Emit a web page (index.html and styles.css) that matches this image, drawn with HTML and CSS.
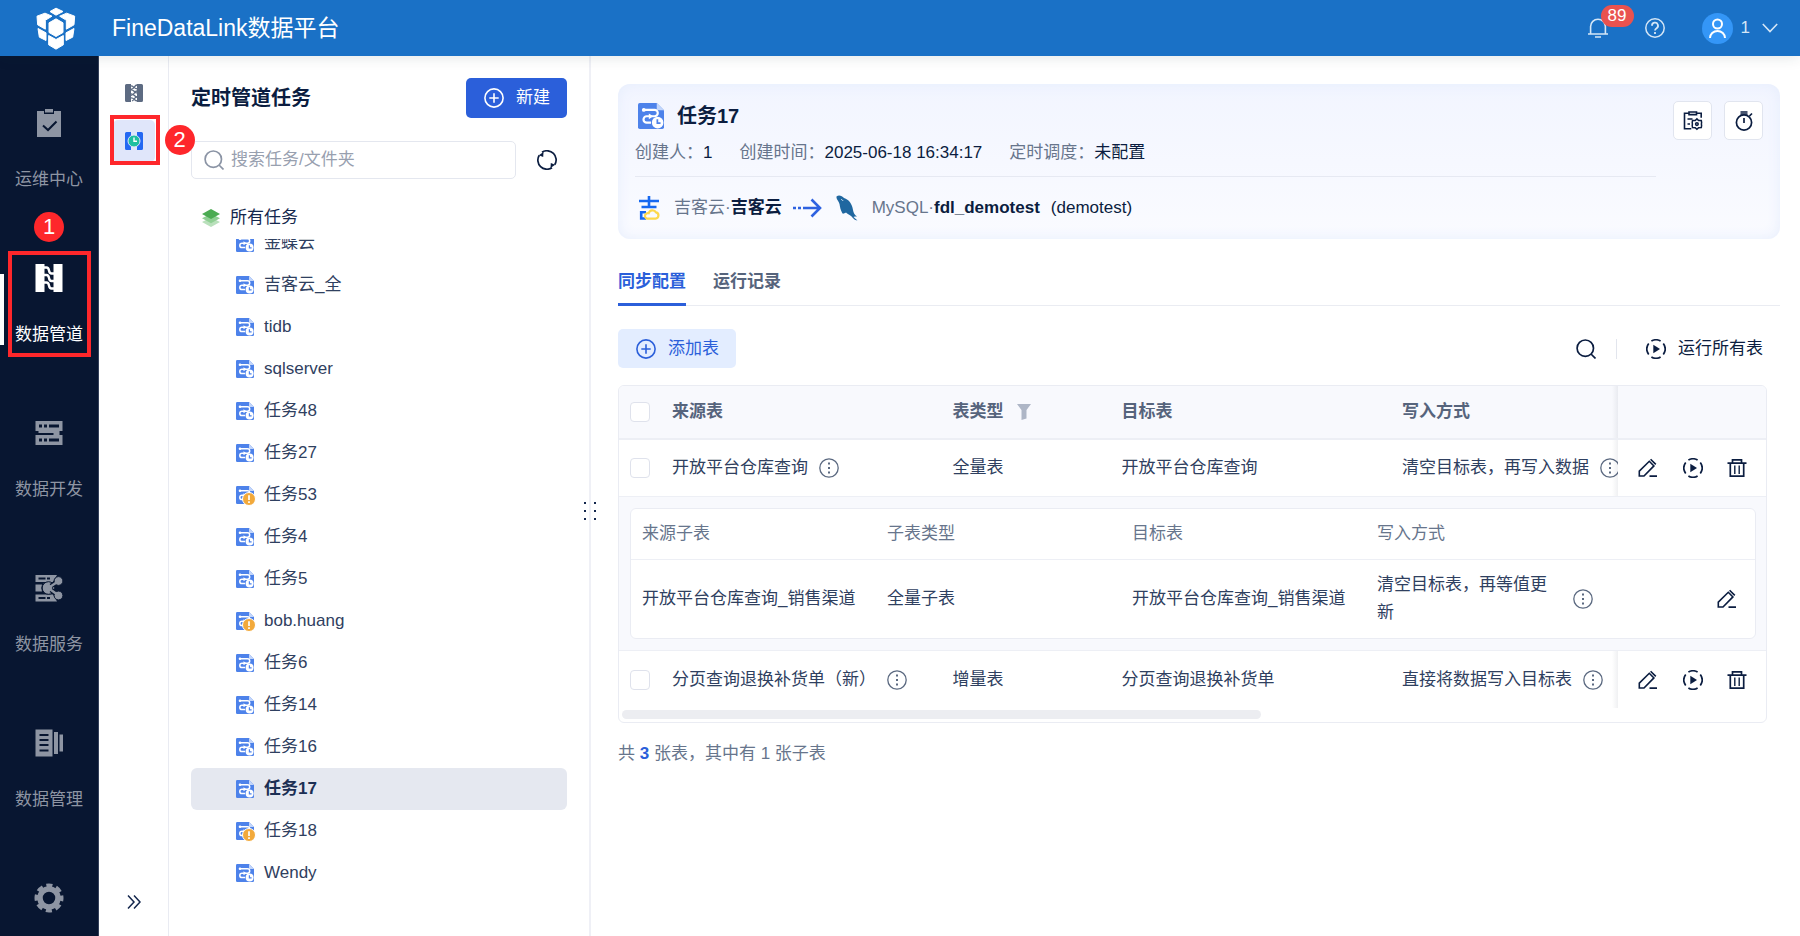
FILE: index.html
```html
<!DOCTYPE html>
<html lang="zh-CN">
<head>
<meta charset="utf-8">
<title>FineDataLink数据平台</title>
<link rel="stylesheet" href="styles.css">
</head>
<body>
<svg class="sprite" aria-hidden="true">
  <symbol id="i-task" viewBox="0 0 18 18">
    <path fill="#4d82ea" d="M1.200 0H13l5 5v11.800q0 1.200-1.200 1.200H1.200Q0 18 0 16.800V1.200Q0 0 1.200 0z"/>
    <path fill="#c3d6fb" d="M13 0l5 5h-4.200q-.8 0-.8-.8z"/>
    <path fill="none" stroke="#fff" stroke-width="1.500" d="M3.500 4.800H11.500a2.200 2.200 0 0 1 0 4.400H6a2.200 2.200 0 0 0 0 4.400H9"/>
    <circle cx="4" cy="4.800" r="1.300" fill="#fff"/><path fill="#fff" d="M7.500 7.200l3 2-3 2z"/>
    <circle cx="13.600" cy="13.600" r="4" fill="#fff"/>
    <path fill="none" stroke="#4d82ea" stroke-width="1.200" d="M13.400 11.300v2.600h2.200"/>
  </symbol>
  <symbol id="i-warn" viewBox="0 0 14 14">
    <circle cx="7" cy="7" r="6.500" fill="#f2a93b" stroke="#fff"/>
    <path stroke="#fff" stroke-width="1.700" d="M7 3.200v4.800M7 9.300v1.700"/>
  </symbol>
  <symbol id="i-plus" viewBox="0 0 20 20">
    <g fill="none" stroke="currentColor" stroke-width="1.600"><circle cx="10" cy="10" r="9.100"/><path d="M10 5.300v9.400M5.300 10h9.400"/></g>
  </symbol>
  <symbol id="i-search" viewBox="0 0 20 20">
    <g fill="none" stroke="currentColor" stroke-width="1.700"><circle cx="9.300" cy="9.200" r="8.200"/><path d="M15 15l4.500 4.500"/></g>
  </symbol>
  <symbol id="i-more" viewBox="0 0 20 20">
    <circle cx="10" cy="10" r="9.200" fill="none" stroke="currentColor" stroke-width="1.300"/>
    <path fill="currentColor" d="M9 4.600h2v2H9zM9 9h2v2H9zM9 13.400h2v2H9z"/>
  </symbol>
  <symbol id="i-run" viewBox="0 0 20 20">
    <path fill="none" stroke="currentColor" stroke-width="1.700" d="M5.400 2.100A9.100 9.100 0 0 1 14.600 2.100M17.300 4.600A9.100 9.100 0 0 1 17.300 15.400M14.600 17.900A9.100 9.100 0 0 1 5.400 17.900M2.700 15.400A9.100 9.100 0 0 1 2.700 4.600"/>
    <path fill="currentColor" d="M7.300 5.800l6.700 4.200-6.700 4.200z"/>
  </symbol>
  <symbol id="i-edit" viewBox="0 0 20 20">
    <g fill="none" stroke="currentColor" stroke-width="1.600"><path d="M1.300 18v-4.800L11.300 3.300l4.600 4.600L6 18zM12.600 1.200l5.200 5.200"/><path d="M11.500 18.100h7.500"/></g>
  </symbol>
  <symbol id="i-trash" viewBox="0 0 20 20">
    <g fill="none" stroke="currentColor" stroke-width="1.700"><path d="M.5 5.200h19M5.500 5V1.800h9V5M3.300 5.500v12.700h13.400V5.500"/><path stroke-width="1.400" d="M7.800 7.500v8.500M12.200 7.500v8.500"/></g>
  </symbol>
</svg>

<header class="topbar">
  <svg class="logo" viewBox="110 20 120 128" fill="#fff" stroke="#fff" stroke-width="3" stroke-linejoin="round">
    <path d="M152 33l18-10 21 10-21 11z"/>
    <path d="M113 47l24-9 21 9-18 11-2 2v26l-23-13z"/>
    <path d="M226 47l-24-9-21 9 18 11 2 2v26l23-13z"/>
    <path d="M149 67l21-12 21 12v29l-21 12-21-12z"/>
    <path d="M116 84l24 13v23l-20-10z"/>
    <path d="M224 84l-24 13v23l20-10z"/>
    <path d="M148 105l22 12 22-12v28l-22 13-22-13z"/>
  </svg>
  <h1 class="brand">FineDataLink数据平台</h1>
  <div class="top-actions">
    <button class="icon-btn bell" aria-label="通知">
      <svg class="i20" viewBox="0 0 20 20" fill="none" stroke="currentColor" stroke-width="1.600"><path d="M0 16h20M2.600 16V8.600a7.400 7.400 0 0 1 14.800 0V16M7 19h6"/></svg>
      <span class="count">89</span>
    </button>
    <button class="icon-btn help" aria-label="帮助">
      <svg class="i20" viewBox="0 0 20 20" fill="none" stroke="currentColor" stroke-width="1.500"><circle cx="10" cy="10" r="9.200"/><path stroke-width="1.800" d="M7 7.800a3 3 0 1 1 4.600 2.400Q10 11.200 10 12.600M10 14v2"/></svg>
    </button>
    <button class="icon-btn user">
      <svg class="avatar" viewBox="0 0 31 31"><circle cx="15.500" cy="15.500" r="15.500" fill="#3496f7"/><g fill="none" stroke="#fff" stroke-width="2"><circle cx="15.500" cy="11" r="4.500"/><path d="M8 25a7.500 7 0 0 1 15 0"/></g></svg>
      <span>1</span>
      <svg class="caret" viewBox="0 0 16 10" fill="none" stroke="currentColor" stroke-width="1.600"><path d="M.8 1L8 8.500 15.200 1"/></svg>
    </button>
  </div>
</header>

<div class="app">
  <nav class="nav" aria-label="主导航">
    <a class="nav-item" href="#">
      <svg viewBox="0 0 30 30"><path fill="currentColor" d="M3 3h7v3h10V3h7v26H3z"/><path fill="currentColor" d="M11 1h8v3.500h-8z"/><path fill="none" stroke="#081631" stroke-width="2" d="M9 17.500l5 4.500 8.500-8.500"/></svg>
      <span>运维中心</span>
    </a>
    <a class="nav-item active" href="#">
      <svg viewBox="0 0 30 30"><path fill="currentColor" d="M1.500 1h9v28h-9zM19.500 1h9v28h-9z"/><path fill="none" stroke="currentColor" stroke-width="2.400" d="M10 4.500h2.500q2 0 2.500 3t2.500 3H20M10 12h2.500q2 0 2.500 3t2.500 3H20M10 19.500h2.500q2 0 2.500 3t2.500 3H20"/></svg>
      <span>数据管道</span>
      <i class="mark-box"></i><b class="mark-no">1</b>
    </a>
    <a class="nav-item" href="#">
      <svg viewBox="0 0 30 30"><path fill="currentColor" fill-rule="evenodd" d="M1.500 3h27v10h-3v4h3v10h-27V17h18v-2h-15v-2h-3zM5 6.500v3h3v-3zM10 6.500v3h3v-3zM15 6.500v3h10v-3zM5 20.500v3h3v-3zM10 20.500v3h3v-3zM15 20.500v3h10v-3z"/></svg>
      <span>数据开发</span>
    </a>
    <a class="nav-item" href="#">
      <svg viewBox="0 0 30 30"><path fill="currentColor" fill-rule="evenodd" d="M1.500 2H23l-4 7H1.500zM4.500 4.500v2h7v-2zM13 4.500v2h3v-2zM1.500 11.500H8q-1.500 3.500 0 7H1.500zM1.500 21.500H19l4 7H1.500zM4.500 24v2h7v-2zM13 24v2h3v-2z"/><circle cx="14.500" cy="15" r="6.300" fill="currentColor" stroke="#081631"/><path stroke="#081631" stroke-width="5" d="M17 13l6-4M17 17l6 4"/><g fill="currentColor" stroke="#081631"><circle cx="24.500" cy="8" r="4.400"/><circle cx="24.500" cy="22.500" r="4.400"/></g><path stroke="currentColor" stroke-width="2.400" d="M15 14.500l9-6M15 15.500l9 6.500"/></svg>
      <span>数据服务</span>
    </a>
    <a class="nav-item" href="#">
      <svg viewBox="0 0 30 30"><path fill="currentColor" fill-rule="evenodd" d="M1.500 1.500h17v27h-17zM5.500 6v2h9V6zM5.500 11v2h9v-2zM5.500 16v2h9v-2zM5.500 21.500v2h9v-2zM20 4h4v22h-4zM25.500 6.500H29v17h-3.500z"/></svg>
      <span>数据管理</span>
    </a>
    <a class="nav-item" href="#" aria-label="管理系统">
      <svg viewBox="0 0 30 30" fill="none" stroke="currentColor"><circle cx="15" cy="15" r="9" stroke-width="5.500"/><circle cx="15" cy="15" r="12.500" stroke-width="4" stroke-dasharray="6 3.817" stroke-dashoffset="3"/></svg>
    </a>
  </nav>

  <aside class="rail">
    <button class="rail-btn" aria-label="实时管道">
      <svg viewBox="0 0 18 18"><path fill="#5d6b82" d="M0 1.500Q0 0 1.500 0H6v18H1.500Q0 18 0 16.500zM12 0h4.500Q18 0 18 1.500v15q0 1.500-1.500 1.500H12z"/><path fill="none" stroke="#5d6b82" stroke-width="1.300" d="M5 2c4-1 3 3 8 3M5 6c5-1 3 3 8 3M5 10c5-1 3 3 8 3M5 14c5-1 3 3 8 3M12 1C9 1 10 5 5.500 5.500M12 7c-3 0-2 4-6.500 4.500M12 13c-3 0-2 3-5 4"/></svg>
    </button>
    <button class="rail-btn current" aria-label="定时管道">
      <svg viewBox="0 0 18 18"><path fill="#2468f2" d="M0 1.500Q0 0 1.500 0H6v18H1.500Q0 18 0 16.500zM12 0h4.500Q18 0 18 1.500v15q0 1.500-1.500 1.500H12z"/><circle cx="9" cy="9" r="6" fill="#1fc0a0" stroke="#e0e7fa"/><path fill="none" stroke="#fff" stroke-width="1.400" d="M9 5.500V9.300h3"/></svg>
      <i class="mark-box"></i><b class="mark-no">2</b>
    </button>
    <button class="rail-btn expand" aria-label="展开">
      <svg viewBox="0 0 14 14" fill="none" stroke="#14274d" stroke-width="1.500"><path d="M1 .5L7 7l-6 6.500M7 .5L13 7l-6 6.500"/></svg>
    </button>
  </aside>

  <section class="tasks">
    <div class="tasks-head">
      <h2>定时管道任务</h2>
      <button class="btn-primary"><svg class="i20"><use href="#i-plus"/></svg><span>新建</span></button>
    </div>
    <div class="tasks-search">
      <label class="search-box"><svg class="i20"><use href="#i-search"/></svg><input type="text" placeholder="搜索任务/文件夹" aria-label="搜索任务/文件夹"></label>
      <button class="icon-btn dark" aria-label="刷新">
        <svg class="i20" viewBox="0 0 20 20"><path fill="none" stroke="currentColor" stroke-width="1.700" d="M5 2.300A9.100 9.100 0 0 1 17.700 14.800M15 17.700A9.100 9.100 0 0 1 2.300 5.200"/><path fill="currentColor" d="M1.800 5.200L6.500 2l-.3 5zM18.200 14.800L13.500 18l.3-5z"/></svg>
      </button>
    </div>
    <a class="tree-root" href="#">
      <svg viewBox="0 0 18 18"><path fill="#b9e0bb" d="M0 13l9-4.500 9 4.500-9 5z"/><path fill="#8fcf93" d="M0 9.300l9-4.500 9 4.500-9 5z"/><path fill="#4bab52" d="M0 5l9-5 9 5-9 5z"/></svg>
      <span>所有任务</span>
    </a>
    <div class="tree-view">
      <ul class="tree">
        <li><a href="#"><svg class="ti"><use href="#i-task"/></svg>金蝶云</a></li>
        <li><a href="#"><svg class="ti"><use href="#i-task"/></svg>吉客云_全</a></li>
        <li><a href="#"><svg class="ti"><use href="#i-task"/></svg>tidb</a></li>
        <li><a href="#"><svg class="ti"><use href="#i-task"/></svg>sqlserver</a></li>
        <li><a href="#"><svg class="ti"><use href="#i-task"/></svg>任务48</a></li>
        <li><a href="#"><svg class="ti"><use href="#i-task"/></svg>任务27</a></li>
        <li><a href="#"><svg class="ti"><use href="#i-task"/></svg><svg class="warn"><use href="#i-warn"/></svg>任务53</a></li>
        <li><a href="#"><svg class="ti"><use href="#i-task"/></svg>任务4</a></li>
        <li><a href="#"><svg class="ti"><use href="#i-task"/></svg>任务5</a></li>
        <li><a href="#"><svg class="ti"><use href="#i-task"/></svg><svg class="warn"><use href="#i-warn"/></svg>bob.huang</a></li>
        <li><a href="#"><svg class="ti"><use href="#i-task"/></svg>任务6</a></li>
        <li><a href="#"><svg class="ti"><use href="#i-task"/></svg>任务14</a></li>
        <li><a href="#"><svg class="ti"><use href="#i-task"/></svg>任务16</a></li>
        <li><a href="#" class="selected"><svg class="ti"><use href="#i-task"/></svg>任务17</a></li>
        <li><a href="#"><svg class="ti"><use href="#i-task"/></svg><svg class="warn"><use href="#i-warn"/></svg>任务18</a></li>
        <li><a href="#"><svg class="ti"><use href="#i-task"/></svg>Wendy</a></li>
      </ul>
    </div>
    <svg class="grip" viewBox="0 0 12 18" fill="#14274d"><path d="M0 0h2v2H0zM10 0h2v2h-2zM0 8h2v2H0zM10 8h2v2h-2zM0 16h2v2H0zM10 16h2v2h-2z"/></svg>
  </section>

  <main class="main">
    <section class="card">
      <div class="card-body">
        <div class="card-title"><svg><use href="#i-task"/></svg><h2>任务17</h2></div>
        <dl class="meta">
          <div><dt>创建人：</dt><dd>1</dd></div>
          <div><dt>创建时间：</dt><dd>2025-06-18 16:34:17</dd></div>
          <div><dt>定时调度：</dt><dd>未配置</dd></div>
        </dl>
        <div class="route">
          <svg class="src" viewBox="0 0 22 24"><path fill="none" stroke="#1668f0" stroke-width="2.600" d="M1 5h20M11 0v10.500M3.500 11h15M8 22.500H3.200V16.200H8"/><path fill="none" stroke="#fcd84c" stroke-width="2.200" d="M9 22.700h8.500a3.200 3.200 0 0 0 .5-6.300 4 4 0 0 0-7.300.8 2.800 2.800 0 0 0-1.700 5.500z"/></svg>
          <p><span class="muted">吉客云·</span><b>吉客云</b></p>
          <svg class="arrow" viewBox="0 0 29 20" fill="none" stroke="#2e62e0" stroke-width="2.600"><path d="M0 10h3M5 10h3M10 10h17M18.500 1.500L27 10l-8.500 8.500"/></svg>
          <svg class="dst" viewBox="0 0 22 26"><path fill="#1f67a0" d="M.5 1.500C3-.5 6 1 8 3c5 1.500 8 6 9 12 .5 3 1.500 5 4 6.500-1.500 0-3 0-3.500.5l4 3.500c-3 0-5-3-6.500-4.500-2-1.500-3.500-2-5-3.500-2 1-3.500 2-4 0C4.500 15 4 12 3.500 9 3 6 0 4.500.5 1.500z"/><path fill="none" stroke="#d9e9f5" stroke-width="1" d="M5 4.500c1 0 1.500.5 2 1.500"/></svg>
          <p><span class="muted">MySQL·</span><b>fdl_demotest</b><span class="db">(demotest)</span></p>
        </div>
      </div>
      <div class="card-tools">
        <button aria-label="任务配置"><svg class="i20" viewBox="0 0 20 20" fill="none" stroke="currentColor" stroke-width="1.600"><path d="M6 2.300H1.500v15.500h6.800M13.500 2.300h4.700v4.500M6 1h7.500v2.600H6zM4.500 8h5M4.500 13h2.500"/><path stroke-width="1.500" d="M13.900 7.900l1.700 1.600 2.700.1.300 2-.2 1.400.2 1.600-.3 2-2.700.1-1.700 1.600-1.700-1.600-2.700-.1-.3-2 .2-1.600-.2-1.400.3-2 2.700-.1z"/><circle cx="13.900" cy="13.100" r="1.300"/></svg></button>
        <button aria-label="定时设置"><svg class="i20" viewBox="0 0 20 20" fill="none" stroke="currentColor" stroke-width="1.700"><circle cx="10" cy="11.500" r="7.600"/><path d="M6.500 1h7M6.500 3h7M15.500 5l2.500-2.500M10 7v5"/></svg></button>
      </div>
    </section>

    <div class="tabs" role="tablist">
      <button role="tab" aria-selected="true" class="tab on">同步配置</button>
      <button role="tab" aria-selected="false" class="tab">运行记录</button>
    </div>

    <div class="toolbar">
      <button class="btn-soft"><svg class="i20"><use href="#i-plus"/></svg><span>添加表</span></button>
      <div class="tool-right">
        <button class="icon-btn dark" aria-label="搜索"><svg class="i20"><use href="#i-search"/></svg></button>
        <i class="sep"></i>
        <button class="icon-btn dark run-all"><svg class="i20"><use href="#i-run"/></svg><span>运行所有表</span></button>
      </div>
    </div>

    <div class="grid-wrap">
      <table class="grid">
        <colgroup><col class="c-check"><col><col class="c-type"><col><col class="c-write"><col class="c-act"></colgroup>
        <thead>
          <tr>
            <th class="check"><input type="checkbox" aria-label="全选"></th>
            <th>来源表</th>
            <th><span class="line">表类型<button class="icon-btn filter" aria-label="筛选"><svg viewBox="0 0 14 16" fill="#aeb6c6"><path d="M0 0h14L9.500 6v8.500L4.500 16V6z"/></svg></button></span></th>
            <th>目标表</th>
            <th>写入方式</th>
            <th class="act" aria-label="操作"></th>
          </tr>
        </thead>
        <tbody>
          <tr>
            <td class="check"><input type="checkbox" aria-label="选择 开放平台仓库查询"></td>
            <td><span class="line">开放平台仓库查询<svg class="i20 more"><use href="#i-more"/></svg></span></td>
            <td>全量表</td>
            <td>开放平台仓库查询</td>
            <td class="clip"><span class="line">清空目标表，再写入数据<svg class="i20 more"><use href="#i-more"/></svg></span></td>
            <td class="act"><span class="acts"><button class="icon-btn dark" aria-label="编辑"><svg class="i20"><use href="#i-edit"/></svg></button><button class="icon-btn dark" aria-label="运行"><svg class="i20"><use href="#i-run"/></svg></button><button class="icon-btn dark" aria-label="删除"><svg class="i20"><use href="#i-trash"/></svg></button></span></td>
          </tr>
          <tr class="nested">
            <td colspan="6">
              <div class="sub-wrap">
                <table class="sub">
                  <colgroup><col class="c-sub"><col class="c-sub"><col class="c-sub"><col class="c-sub"><col></colgroup>
                  <thead><tr><th>来源子表</th><th>子表类型</th><th>目标表</th><th>写入方式</th><th aria-label="操作"></th></tr></thead>
                  <tbody><tr>
                    <td>开放平台仓库查询_销售渠道</td>
                    <td>全量子表</td>
                    <td>开放平台仓库查询_销售渠道</td>
                    <td class="mode"><span class="line"><span class="wrap">清空目标表，再等值更新</span><svg class="i20 more"><use href="#i-more"/></svg></span></td>
                    <td class="sub-act"><button class="icon-btn dark" aria-label="编辑"><svg class="i20"><use href="#i-edit"/></svg></button></td>
                  </tr></tbody>
                </table>
              </div>
            </td>
          </tr>
          <tr class="last">
            <td class="check"><input type="checkbox" aria-label="选择 分页查询退换补货单（新）"></td>
            <td><span class="line">分页查询退换补货单（新）<svg class="i20 more"><use href="#i-more"/></svg></span></td>
            <td>增量表</td>
            <td>分页查询退换补货单</td>
            <td class="clip"><span class="line">直接将数据写入目标表<svg class="i20 more"><use href="#i-more"/></svg></span></td>
            <td class="act"><span class="acts"><button class="icon-btn dark" aria-label="编辑"><svg class="i20"><use href="#i-edit"/></svg></button><button class="icon-btn dark" aria-label="运行"><svg class="i20"><use href="#i-run"/></svg></button><button class="icon-btn dark" aria-label="删除"><svg class="i20"><use href="#i-trash"/></svg></button></span></td>
          </tr>
        </tbody>
      </table>
      <div class="hscroll"><i></i></div>
    </div>
    <p class="summary">共 <b>3</b> 张表，其中有 1 张子表</p>
  </main>
</div>
</body>
</html>
```

FILE: styles.css
```css
*, *::before, *::after { box-sizing: border-box; }

body {
  margin: 0;
  min-height: 100vh;
  display: flex;
  flex-direction: column;
  background: #fff;
  color: #2f4060;
  font: 17px/24px "Liberation Sans", "Noto Sans CJK SC", sans-serif;
}

h1, h2, p, dl, dd, ul { margin: 0; padding: 0; }
a { color: inherit; text-decoration: none; }
svg { display: block; flex: none; }
button, input { font: inherit; color: inherit; margin: 0; }
button { border: 0; padding: 0; background: none; display: flex; align-items: center; cursor: pointer; }
.sprite { position: absolute; width: 0; height: 0; }
.i20 { width: 20px; height: 20px; }
.dark { color: #0b1d40; }

/* top bar */
.topbar {
  position: relative;
  z-index: 2;
  height: 56px;
  display: flex;
  align-items: center;
  padding: 0 22px 0 36px;
  background: #1a71c6;
  color: #fff;
  box-shadow: 0 1px 14px rgba(20, 50, 50, .12);
}
.logo { width: 40px; height: 43px; }
.brand { margin-left: 36px; font-size: 23px; line-height: 32px; font-weight: 400; }
.top-actions { margin-left: auto; display: flex; align-items: center; color: #d5e6f6; }
.bell { position: relative; }
.count {
  position: absolute;
  left: 13px;
  top: -13px;
  width: 33px;
  line-height: 22px;
  border-radius: 11px;
  background: #e9524f;
  color: #fff;
  font-size: 17px;
  text-align: center;
}
.help { margin-left: 37px; }
.user { margin-left: 37px; }
.user span { margin: 0 12px 0 8px; }
.avatar { width: 31px; height: 31px; }
.caret { width: 16px; height: 10px; }

.app { flex: 1; display: flex; }

/* primary navigation */
.nav {
  width: 99px;
  flex: none;
  padding-top: 52px;
  display: flex;
  flex-direction: column;
  gap: 71px;
  background: #081631;
  border-right: 1px solid #34405a;
  color: #8e95a3;
}
.nav-item { position: relative; display: flex; flex-direction: column; align-items: center; gap: 30px; }
.nav-item svg { width: 30px; height: 30px; }
.nav-item.active { color: #fff; }
.nav-item.active::before { content: ""; position: absolute; left: 0; top: 11px; bottom: 2px; width: 4px; background: #fff; }

/* numbered callouts */
.mark-box { position: absolute; border: 4px solid #fe272b; }
.mark-no {
  position: absolute;
  width: 30px;
  line-height: 30px;
  border-radius: 50%;
  background: #fe272b;
  color: #fff;
  font-size: 22px;
  font-weight: 400;
  text-align: center;
}
.nav-item .mark-box { inset: -12px 7px -10px 8px; }
.nav-item .mark-no { top: -51px; left: 34px; }

/* secondary rail */
.rail {
  width: 70px;
  flex: none;
  padding: 16px 0 13px;
  display: flex;
  flex-direction: column;
  align-items: center;
  border-right: 1px solid #e9ebf2;
}
.rail-btn { position: relative; width: 42px; height: 42px; justify-content: center; border-radius: 5px; }
.rail-btn svg { width: 18px; height: 18px; }
.rail-btn.current { margin-top: 6px; background: #e0e6fa; }
.rail-btn .mark-box { inset: -5px -5px -3px -3px; }
.rail-btn .mark-no { left: 52px; top: 5px; z-index: 1; }
.rail-btn.expand { margin-top: auto; }
.rail-btn.expand svg { width: 14px; height: 14px; }

/* task list */
.tasks { position: relative; width: 422px; flex: none; padding: 22px 22px 0; border-right: 2px solid #eff0f6; }
.tasks-head { display: flex; align-items: center; justify-content: space-between; }
.tasks-head h2 { font-size: 20px; line-height: 30px; color: #0b1d40; }
.btn-primary { height: 40px; padding: 0 17px 0 18px; gap: 12px; border-radius: 5px; background: #2b5fda; color: #fff; }
.tasks-search { margin-top: 23px; display: flex; align-items: center; gap: 21px; padding-right: 10px; }
.search-box { flex: 1; height: 38px; display: flex; align-items: center; gap: 7px; padding: 0 12px; border: 1px solid #e4e7ef; border-radius: 5px; color: #8b94a5; }
.search-box input { flex: 1; min-width: 0; border: 0; padding: 0; outline: 0; background: none; }
.search-box input::placeholder { color: #98a0af; opacity: 1; }
.tree-root { margin-top: 27px; padding-left: 11px; display: flex; align-items: center; gap: 10px; color: #14274d; }
.tree-root svg { width: 18px; height: 18px; }
.tree-view { margin-top: 9px; overflow: hidden; }
.tree { list-style: none; margin-top: -17px; }
.tree a { position: relative; height: 42px; display: flex; align-items: center; gap: 10px; padding-left: 45px; border-radius: 6px; }
.tree .selected { background: #e5e8f0; color: #1c2f54; font-weight: 700; }
.ti { width: 18px; height: 18px; }
.warn { position: absolute; left: 51px; top: 18px; width: 14px; height: 14px; }
.grip { position: absolute; right: -7px; top: 446px; width: 12px; height: 18px; }

/* main */
.main { flex: 1; min-width: 0; padding: 28px 20px 28px 27px; }
.card {
  display: flex;
  gap: 17px;
  padding: 0 17px;
  border-radius: 12px;
  background: linear-gradient(#f2f5ff, #fafbff);
  box-shadow: inset 0 0 14px #e6edfc;
}
.card-body { flex: 1; padding-top: 16px; }
.card-title { display: flex; align-items: center; gap: 13px; padding-left: 3px; }
.card-title svg { width: 26px; height: 26px; }
.card-title h2 { font-size: 20px; line-height: 32px; color: #0b1d40; }
.meta { display: flex; flex-wrap: wrap; gap: 27px; padding: 9px 0 11px; border-bottom: 1px solid #e6e9f2; }
.meta div { display: flex; }
.meta dt { color: #67758c; }
.meta dd { color: #0b1d40; }
.route { display: flex; align-items: center; min-height: 62px; padding-left: 3px; color: #0b1d40; }
.muted { color: #67758c; }
.src { width: 22px; height: 24px; margin-right: 14px; }
.arrow { width: 29px; height: 20px; margin: 0 14px 0 11px; }
.dst { width: 22px; height: 26px; margin-right: 14px; }
.db { margin-left: 11px; }
.card-tools { display: flex; gap: 12px; padding-top: 17px; }
.card-tools button { width: 39px; height: 39px; justify-content: center; border: 1px solid #e1e5ef; border-radius: 5px; background: #fff; color: #0b1d40; }

.tabs { display: flex; gap: 27px; margin-top: 20px; box-shadow: inset 0 -1px #eaecf2; }
.tab { padding: 11px 0 9px; border-bottom: 3px solid transparent; color: #56647c; font-weight: 700; }
.tab.on { color: #2b5fda; border-color: #2b5fda; }

.toolbar { display: flex; align-items: center; justify-content: space-between; margin: 23px 0 17px; }
.btn-soft { height: 39px; padding: 0 17px 0 18px; gap: 12px; border-radius: 5px; background: #e3edff; color: #2b5fda; }
.tool-right { display: flex; align-items: center; padding-right: 17px; }
.sep { width: 1px; height: 20px; margin: 0 29px 0 20px; background: #e2e5ed; }
.run-all { gap: 12px; }

/* tables */
.grid-wrap { margin-right: 13px; border: 1px solid #eaecf3; border-radius: 6px; overflow: hidden; }
table { width: 100%; table-layout: fixed; border-collapse: separate; border-spacing: 0; }
th, td { padding: 0; text-align: left; vertical-align: middle; }
.c-check { width: 53px; }
.c-type { width: 169px; }
.c-write { width: 216px; }
.c-act { width: 148px; }
.grid > thead th { height: 54px; background: #f8f9fd; border-bottom: 2px solid #edeff5; color: #56647c; }
.grid > tbody > tr > td { height: 57px; border-bottom: 1px solid #edeff5; }
.grid > tbody > .last > td { border-bottom: 0; }
.check { padding-left: 11px; }
input[type="checkbox"] { appearance: none; display: block; width: 20px; height: 20px; border: 1px solid #dfe2ec; border-radius: 4px; background: #fff; }
.line { display: flex; align-items: center; gap: 11px; white-space: nowrap; }
.filter { margin-left: 2px; }
.filter svg { width: 14px; height: 16px; }
.more { color: #5b6980; }
.clip { overflow: hidden; }
.act { position: relative; }
.act::before { content: ""; position: absolute; top: 0; bottom: 0; left: -6px; width: 6px; background: linear-gradient(to right, rgba(60, 70, 95, 0), rgba(60, 70, 95, .08)); }
.acts { display: flex; justify-content: space-between; padding: 0 19px 0 20px; }

.grid > tbody > .nested > td { padding: 11px 10px 11px 11px; background: #f8f9fd; }
.sub-wrap { border: 1px solid #eaecf3; border-radius: 6px; background: #fff; overflow: hidden; }
.c-sub { width: 245px; }
.sub th { height: 51px; padding-left: 11px; border-bottom: 1px solid #edeff5; color: #67758c; font-weight: 400; }
.sub td { height: 78px; padding-left: 11px; }
.sub .mode { padding-right: 18px; }
.mode .line { gap: 14px; }
.wrap { flex: 1; white-space: normal; line-height: 28px; }
.sub-act .icon-btn { margin: 0 18px 0 auto; }

.hscroll { padding: 2px 3px 3px; }
.hscroll i { display: block; width: 56%; height: 9px; border-radius: 5px; background: #ecedf1; }
.summary { margin-top: 19px; color: #67758c; }
.summary b { color: #2b5fda; }
```
